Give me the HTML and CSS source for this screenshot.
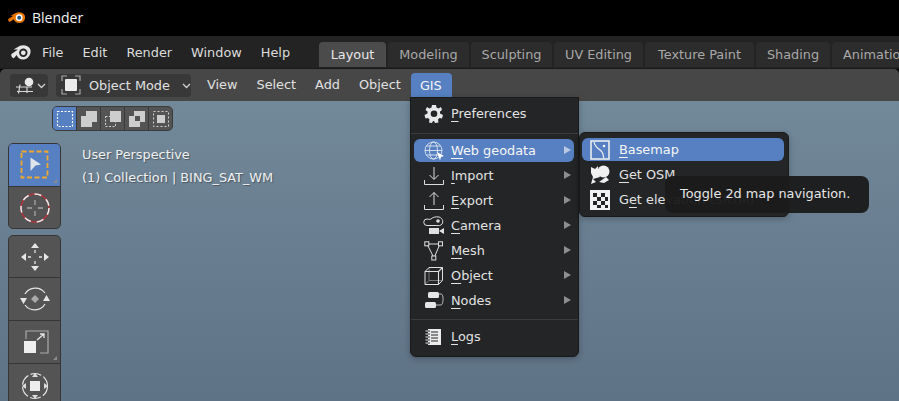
FILE: index.html
```html
<!DOCTYPE html>
<html lang="en">
<head>
<meta charset="utf-8">
<title>Blender</title>
<link rel="stylesheet" href="styles.css">
</head>
<body>
<div class="app">
  <div class="titlebar">
    <svg class="title-logo" viewBox="0 0 28 18"><path fill="#ea7600" d="M0.500 10.500 8 5.500H3.500L11.500 1.500c5-2 11-.5 13 3.500 2.500 5.500-1.500 11.500-7.500 11.500-4.500 0-7.500-2.500-8.500-5.500L3 14.500c-1.500 1-3.500-2.500-2.500-4Z"/><circle cx="16.500" cy="8.500" r="5" fill="#fff"/><circle cx="16.500" cy="8.500" r="3" fill="#265787"/></svg>
    <span class="title-text">Blender</span>
  </div>
  <div class="topbar">
    <svg class="top-logo" viewBox="0 0 20 16"><path fill="#e6e6e6" d="M0.500 9 7 4.500H2.500L9 .8c4-1.500 8.500 0 10 3 2 4.500-1.500 10.500-6.500 10.700-3.500.2-6-1.700-6.800-4.500L3 13c-1.500 1-3.500-2.500-2.500-4Z"/><circle cx="12.300" cy="7.800" r="4.200" fill="#232323"/><circle cx="12.300" cy="7.800" r="2.400" fill="#e6e6e6"/></svg>
    <nav class="topmenu">
      <span>File</span><span>Edit</span><span>Render</span><span>Window</span><span>Help</span>
    </nav>
    <div class="tabs">
      <span class="tab tab-active tab-layout">Layout</span>
      <span class="tab tab-modeling">Modeling</span>
      <span class="tab tab-sculpting">Sculpting</span>
      <span class="tab tab-uv">UV Editing</span>
      <span class="tab tab-texture">Texture Paint</span>
      <span class="tab tab-shading">Shading</span>
      <span class="tab tab-anim">Animation</span>
    </div>
  </div>
  <div class="header">
    <div class="btn editor-btn">
      <svg width="22" height="18" viewBox="0 0 22 18"><g stroke="#d8d8d8" stroke-width="1.200" fill="none"><path d="M1 11H17M2 15.500H18M5 8.500 3.500 17.500M12 11.500 12 17"/></g><circle cx="14" cy="6" r="4.300" fill="#e8e8e8"/></svg>
      <svg class="chev" width="9" height="6" viewBox="0 0 9 6"><path d="M1 1 4.500 4.500 8 1" fill="none" stroke="#d0d0d0" stroke-width="1.300"/></svg>
    </div>
    <div class="btn mode-btn">
      <svg width="20" height="20" viewBox="0 0 20 20"><path d="M1 6V1H6M14 1H19V6M19 14V19H14M6 19H1V14" fill="none" stroke="#a5a5a5" stroke-width="1.200"/><rect x="4" y="4" width="12" height="12" rx="1" fill="#ececec"/></svg>
      <span class="mode-label">Object Mode</span>
      <svg class="chev" width="9" height="6" viewBox="0 0 9 6"><path d="M1 1 4.500 4.500 8 1" fill="none" stroke="#d0d0d0" stroke-width="1.300"/></svg>
    </div>
    <nav class="headmenu">
      <span>View</span><span>Select</span><span>Add</span><span>Object</span><span class="gis">GIS</span>
    </nav>
  </div>
  <main class="viewport">
    <div class="selmodes">
      <span class="sel sel-on"><svg width="18" height="18" viewBox="0 0 18 18"><rect x="1.500" y="1.500" width="15" height="15" fill="none" stroke="#fff" stroke-width="1.200" stroke-dasharray="2 1.500"/></svg></span>
      <span class="sel"><svg width="18" height="18" viewBox="0 0 18 18"><path d="M6 1H17V12H12V17H1V6H6Z" fill="#cdcdcd"/></svg></span>
      <span class="sel"><svg width="18" height="18" viewBox="0 0 18 18"><path d="M6 1H17V12H6Z" fill="#cdcdcd"/><rect x="1.500" y="6.500" width="10" height="10" fill="none" stroke="#cdcdcd" stroke-dasharray="2 1.500"/></svg></span>
      <span class="sel"><svg width="18" height="18" viewBox="0 0 18 18"><path fill-rule="evenodd" d="M6 1H17V12H12V17H1V6H6ZM7 6V11H12V6Z" fill="#cdcdcd"/></svg></span>
      <span class="sel"><svg width="18" height="18" viewBox="0 0 18 18"><rect x="1.500" y="1.500" width="15" height="15" fill="none" stroke="#cdcdcd" stroke-dasharray="2 2"/><rect x="5" y="5" width="8" height="8" fill="#cdcdcd"/></svg></span>
    </div>
    <div class="canvas-row">
      <div class="toolcol">
        <div class="toolgroup group-short">
          <div class="tool tool-on corner">
            <svg width="30" height="30" viewBox="0 0 30 30"><rect x="1.500" y="1.500" width="26" height="26" fill="none" stroke="#f0a830" stroke-width="1.800" stroke-dasharray="5 2.500"/><path d="M10.500 7.500 21 14.500 15.500 15.500 10.500 21Z" fill="#dfe4ea"/></svg>
          </div>
          <div class="tool">
            <svg width="32" height="32" viewBox="0 0 32 32"><circle cx="16" cy="16" r="14" fill="none" stroke="#b0353a" stroke-width="1.500"/><circle cx="16" cy="16" r="14" fill="none" stroke="#eee" stroke-width="1.500" stroke-dasharray="7 6"/><path d="M16 8V13M16 19V24M8 16H13M19 16H24" stroke="#a5a5a5" stroke-width="1.300"/></svg>
          </div>
        </div>
        <div class="toolgroup">
          <div class="tool">
            <svg width="32" height="32" viewBox="0 0 32 32"><g fill="#e6e6e6"><path d="M16 2 20 7H12ZM16 30 12 25H20ZM2 16 7 12V20ZM30 16 25 20V12Z"/></g><path d="M16 9V12M16 20V23M9 16H12M20 16H23" stroke="#e6e6e6" stroke-width="1.300"/></svg>
          </div>
          <div class="tool">
            <svg width="32" height="32" viewBox="0 0 32 32"><path d="M6 11A12 12 0 0 1 26 10M26 21A12 12 0 0 1 6 22" fill="none" stroke="#e6e6e6" stroke-width="1.200"/><path d="M16 12 20 16 16 20 12 16Z" fill="#aaa"/><path d="M1 15H8L4.500 21ZM31 18H24L27.500 12Z" fill="#e6e6e6"/></svg>
          </div>
          <div class="tool corner">
            <svg width="32" height="32" viewBox="0 0 32 32"><path d="M7 13V5H29V27H21" fill="none" stroke="#aaa" stroke-width="1.200"/><rect x="5" y="15" width="12" height="12" fill="#eee"/><path d="M18 14 25 8M21 8H25V12" fill="none" stroke="#e6e6e6" stroke-width="1.300"/></svg>
          </div>
          <div class="tool">
            <svg width="32" height="32" viewBox="0 0 32 32"><circle cx="16" cy="16" r="12.500" fill="none" stroke="#e6e6e6" stroke-width="1.200" stroke-dasharray="11 2.500"/><rect x="11" y="11" width="10" height="10" fill="#eee"/><path d="M16 3 19 7H13ZM16 29 13 25H19ZM3 16 7 13V19ZM29 16 25 19V13Z" fill="#ddd"/></svg>
          </div>
        </div>
      </div>
      <div class="overlay-text">
        <p>User Perspective</p>
        <p>(1) Collection | BING_SAT_WM</p>
      </div>
    </div>
  </main>

  <div class="menu gis-menu">
    <div class="item"><svg class="ic" viewBox="0 0 20 20"><path fill-rule="evenodd" fill="#e8e8e8" d="M8 1H12L12.500 3.500 14.500 4.500 17 3 18 6 16 7.500V9.500L19 11 18 14.500 15.500 14 14 15.500 14.500 18.500 11 19 10 17H9L8 19 5 18.500 5.500 15.500 4 14 1.500 14.500.5 11 3.500 9.500V7.500L1.500 6 3 3 5.500 4.500 7.500 3.500ZM10 6.500A3.300 3.300 0 1 0 10 13.100 3.300 3.300 0 1 0 10 6.500Z"/></svg><span class="lbl"><u>P</u>references</span></div>
    <hr>
    <div class="item item-on"><svg class="ic" viewBox="0 0 20 20"><g fill="none" stroke="#dfe6f2" stroke-width=".9"><circle cx="9.500" cy="9.500" r="8.500"/><ellipse cx="9.500" cy="9.500" rx="4" ry="8.500"/><path d="M1 9.500H18M2.500 5H16.500M2.500 14H16.500"/></g><path d="M13 11 20 15 17 16 16 19.500Z" fill="#fff"/></svg><span class="lbl"><u>W</u>eb geodata</span><i class="arrow"></i></div>
    <div class="item"><svg class="ic" viewBox="0 0 20 20"><path d="M10 1V13M5.500 9 10 13.500 14.500 9M.5 14V18.500H19.500V14" fill="none" stroke="#ddd" stroke-width="1"/></svg><span class="lbl"><u>I</u>mport</span><i class="arrow"></i></div>
    <div class="item"><svg class="ic" viewBox="0 0 20 20"><path d="M10 14V1.500M5.500 6 10 1.500 14.500 6M.5 14V18.500H19.500V14" fill="none" stroke="#ddd" stroke-width="1"/></svg><span class="lbl"><u>E</u>xport</span><i class="arrow"></i></div>
    <div class="item"><svg class="ic ic-wide" viewBox="0 0 22 20"><path d="M8 9.500H4A3 3 0 0 1 4 3C6 3 6 4 8 3 10 1 13 .5 16 1 20 2 21 7 18 9 16 10 14 9.500 13 9.500H8" fill="none" stroke="#e0e0e0"/><circle cx="15" cy="5" r="1.800" fill="#e0e0e0"/><path d="M6 12H16V18H6ZM16 15 21 12V18Z" fill="#e0e0e0"/></svg><span class="lbl"><u>C</u>amera</span><i class="arrow"></i></div>
    <div class="item"><svg class="ic" viewBox="0 0 20 20"><g fill="none" stroke="#e0e0e0"><path d="M3 3H16L10 17Z"/><rect x=".8" y=".8" width="4" height="4" fill="#232527"/><rect x="14.500" y=".8" width="4" height="4" fill="#232527"/><rect x="7.800" y="15" width="4" height="4" fill="#232527"/></g></svg><span class="lbl"><u>M</u>esh</span><i class="arrow"></i></div>
    <div class="item"><svg class="ic" viewBox="0 0 20 20"><path d="M5 1.500V14.500H18.500M1 18.500 5 14.500" fill="none" stroke="#777"/><g fill="none" stroke="#e0e0e0"><path d="M1 5.500 5 1.500H18.500V14.500L14.500 18.500H1Z"/><path d="M1 5.500H14.500V18.500M14.500 5.500 18.500 1.500" stroke-width="1.100"/></g></svg><span class="lbl"><u>O</u>bject</span><i class="arrow"></i></div>
    <div class="item"><svg class="ic" viewBox="0 0 20 20"><rect x="4" y="1" width="11" height="6" rx="1.500" fill="#e6e6e6"/><rect x="1" y="11" width="11" height="6" rx="1.500" fill="#e6e6e6"/><path d="M15 3H17C20 3 19.500 14 17 14H12" fill="none" stroke="#bbb"/></svg><span class="lbl"><u>N</u>odes</span><i class="arrow"></i></div>
    <hr>
    <div class="item"><svg class="ic" viewBox="0 0 20 20"><path fill="#ececec" d="M4 2H17V18H4Z"/><path d="M7 5H14M7 8H14M7 11H14M7 14H14" stroke="#232527"/><path d="M2 4H6M2 7H6M2 10H6M2 13H6M2 16H6" stroke="#232527"/><path d="M1.500 4H4M1.500 7H4M1.500 10H4M1.500 13H4M1.500 16H4" stroke="#ececec"/></svg><span class="lbl"><u>L</u>ogs</span></div>
  </div>

  <div class="menu sub-menu">
    <div class="item item-on"><svg class="ic" viewBox="0 0 20 20"><rect x="1" y="1" width="18" height="18" fill="none" stroke="#f2f2f2" stroke-width="1.500"/><path d="M4 2C5 8 10 9 12 12 14 15 13 17 14 18" fill="none" stroke="#f2f2f2" stroke-width="1.200"/><circle cx="14" cy="6" r="1.300" fill="#f2f2f2"/></svg><span class="lbl"><u>B</u>asemap</span></div>
    <div class="item"><svg class="ic" viewBox="0 0 20 20"><path d="M1 2 5 4 8 1 8 7 10 12 3 14 6 17 1 19 3 12 1 8Z" fill="#f0f0f0"/><circle cx="13.500" cy="6.500" r="6" fill="#f0f0f0"/><path d="M9 17 16 12 19 15 14 18Z" fill="#f0f0f0"/></svg><span class="lbl"><u>G</u>et OSM</span></div>
    <div class="item"><svg class="ic" viewBox="0 0 20 20"><rect width="20" height="20" fill="#f2f2f2"/><path d="M3 3H7V7H3ZM11 3H15V7H11ZM7 7H11V11H7ZM15 7H18V11H15ZM3 11H7V15H3ZM11 11H15V15H11ZM7 15H11V18H7ZM15 15H18V18H15Z" fill="#232527"/></svg><span class="lbl">G<u>e</u>t elevation (SRTM)</span></div>
  </div>

  <div class="tooltip">Toggle 2d map navigation.</div>
</div>
</body>
</html>
```
FILE: styles.css
```css
* { box-sizing: border-box; }
html, body { margin: 0; height: 100%; overflow: hidden; }
body { font-family: "DejaVu Sans", sans-serif; font-size: 12.85px; color: #e2e2e2; background: #000; }
.app { position: relative; width: 899px; height: 401px; display: flex; flex-direction: column; overflow: hidden; }

.titlebar { height: 36px; background: #000; display: flex; align-items: center; padding: 0 0 1px 8px; gap: 5px; flex: none; }
.title-logo { width: 19px; height: 14px; }
.title-text { font-family: "Open Sans", sans-serif; font-size: 14px; color: #f2f2f2; }

.topbar { height: 33px; background: #232323; display: flex; align-items: center; flex: none; white-space: nowrap; border-bottom: 1px solid #1a1a1a; position: relative; }
.top-logo { width: 20px; height: 16px; margin-left: 11px; margin-top: 1px; flex: none; }
.topmenu { display: flex; gap: 19px; margin-left: 11px; color: #dcdcdc; }
.tabs { display: flex; gap: 2px; color: #a8a8a8; position: absolute; left: 319px; bottom: 0; height: 26px; padding-bottom: 1px; }
.tab { background: #2c2c2c; border-radius: 4px 4px 0 0; display: flex; align-items: center; justify-content: center; flex: none; }
.tab-active { background: #4b4b4b; color: #e8e8e8; }
.tab-layout { width: 67px; }
.tab-modeling { width: 81px; }
.tab-sculpting { width: 81px; }
.tab-uv { width: 89px; }
.tab-texture { width: 109px; }
.tab-shading { width: 74px; }
.tab-anim { width: 90px; justify-content: flex-start; padding-left: 11px; }

.header { height: 32px; background: #474747; border-radius: 5px 5px 0 0; display: flex; align-items: center; flex: none; padding-left: 10px; white-space: nowrap; color: #e0e0e0; }
.btn { height: 23px; background: #383838; border-radius: 4px; display: flex; align-items: center; }
.editor-btn { width: 38px; padding-left: 5px; }
.mode-btn { width: 135px; margin-left: 8px; padding-left: 5px; }
.mode-label { margin-left: 8px; width: 93px; }
.chev { flex: none; margin-top: 1px; }
.headmenu { display: flex; height: 28px; margin-left: 16px; gap: 19px; align-self: flex-end; align-items: center; }
.headmenu span { line-height: 28px; margin-top: -4px; }
.headmenu .gis { background: #5680c2; color: #f4f4f4; width: 41px; height: 28px; border-radius: 4px 4px 0 0; text-align: center; margin: 0 0 0 -9px; padding-right: 1px; line-height: 25px; }

.viewport { flex: 1; background: linear-gradient(180deg, #72899a 0%, #5e7285 100%); padding: 5px 0 0 52px; position: relative; }
.selmodes { display: flex; width: 121px; height: 25px; background: #545454; border: 1px solid #3a3a3a; border-radius: 5px; overflow: hidden; }
.sel { flex: 1; display: flex; align-items: center; justify-content: center; border-right: 1px solid #3a3a3a; }
.sel:last-child { border-right: 0; }
.sel-on { background: #5680c2; }
.canvas-row { display: flex; margin: 12px 0 0 -44px; }
.toolcol { width: 53px; display: flex; flex-direction: column; gap: 6px; flex: none; }
.toolgroup { background: #545454; border: 1px solid #363636; border-radius: 5px; overflow: hidden; }
.tool { height: 43px; display: flex; align-items: center; justify-content: center; border-bottom: 1px solid #363636; position: relative; }
.tool:first-child { height: 42px; }
.tool:last-child { border-bottom: 0; }
.group-short .tool:first-child { height: 43px; }
.group-short .tool:last-child { height: 41px; }
.tool-on { background: #5680c2; }
.corner::after { content: ""; position: absolute; right: 3px; bottom: 3px; border: 2.500px solid transparent; border-right-color: #8c8c8c; border-bottom-color: #8c8c8c; }
.overlay-text { margin: 1px 0 0 21px; color: #f0f0f0; text-shadow: 1px 1px 1px rgba(0, 0, 0, .35); white-space: nowrap; }
.overlay-text p { margin: 0; height: 23px; line-height: 21px; }

.menu { position: absolute; background: #232527; border: 1px solid #1a1a1a; border-radius: 6px; box-shadow: 0 2px 6px rgba(0, 0, 0, .25); white-space: nowrap; color: #e2e2e2; }
.gis-menu { left: 410px; top: 97px; width: 169px; height: 260px; padding: 4px 4px 0 3px; border-radius: 0 0 6px 6px; }
.sub-menu { left: 579px; top: 132px; width: 210px; height: 85px; padding: 5px 4px 0 2px; }
.menu .item { display: flex; align-items: center; height: 23px; margin-bottom: 2px; padding-left: 10px; border-radius: 6px; position: relative; }
.sub-menu .item { padding-left: 8px; }
.item-on { background: #5680c2; color: #f6f6f6; }
.ic { width: 20px; height: 20px; flex: none; }
.ic-wide { width: 22px; margin-left: -1px; margin-right: -1px; }
.lbl { margin-left: 7px; }
.sub-menu .lbl { margin-left: 9px; }
u { text-underline-offset: 3px; text-decoration-thickness: 1px; }
.arrow { position: absolute; right: 3px; top: 7px; border: 4px solid transparent; border-left: 7px solid #8e8e8e; border-right: 0; }
.item-on .arrow { border-left-color: #b9c9e4; }
.menu hr { border: 0; height: 1px; background: #3a3c3e; margin: 8px -4px 5px -3px; }
.menu hr ~ hr { margin-top: 7px; }
.tooltip { position: absolute; left: 665px; top: 176px; width: 204px; height: 37px; border-radius: 8px; background: rgba(27, 27, 27, .96); color: #e6e6e6; padding-left: 15px; line-height: 36px; white-space: nowrap; }
```
